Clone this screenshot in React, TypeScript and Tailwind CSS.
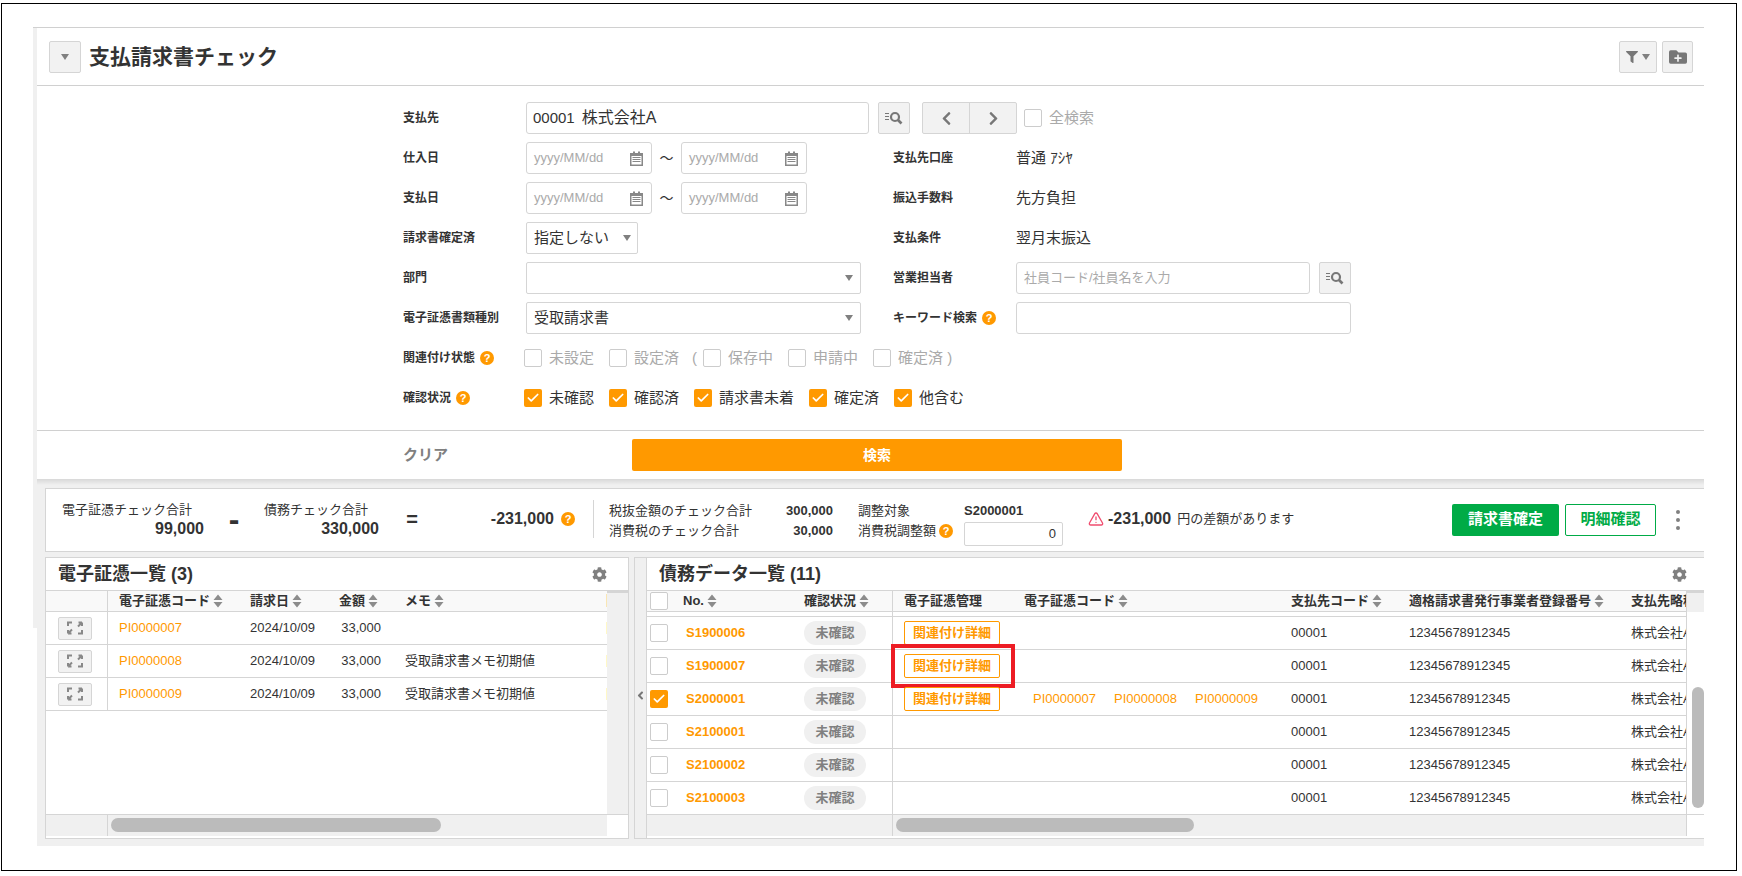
import { FaAngleLeft, FaChevronLeft, FaChevronRight, FaCog, FaFilter, FaFolderPlus } from 'react-icons/fa';
import { Check, TriangleAlert } from 'lucide-react';

const Help = () => (
  <span className="flex h-[14px] w-[14px] shrink-0 items-center justify-center rounded-full bg-[#ff9900] text-[11px] leading-none font-bold text-white">
    ?
  </span>
);

const CheckBox = ({ checked = false }: { checked?: boolean }) =>
  checked ? (
    <span className="flex h-[18px] w-[18px] shrink-0 items-center justify-center rounded-[2px] bg-[#ff9900] text-white">
      <Check size={14} strokeWidth={3} />
    </span>
  ) : (
    <span className="block h-[18px] w-[18px] shrink-0 rounded-[2px] border border-[#ccc] bg-white" />
  );

const Caret = () => (
  <span className="h-0 w-0 border-x-[4px] border-t-[6px] border-x-transparent border-t-[#808080]" />
);

const SearchList = () => (
  <svg width="18" height="14" viewBox="0 0 18 14" fill="none" stroke="#777">
    <path d="M0 2.5h4M0 5.5h4M0 8.5h4" strokeWidth="1" />
    <circle cx="10" cy="6" r="4" strokeWidth="2.2" />
    <path d="M13 9l3.5 3.5" strokeWidth="2.6" />
  </svg>
);

const Calendar = () => (
  <svg width="15" height="15" viewBox="0 0 15 15" className="shrink-0">
    <path d="M1 2h3V0.5h2V2h3V0.5h2V2h3v13H1z" fill="#888" />
    <path d="M2.5 5h10v8.5h-10z" fill="#fff" />
    <path d="M3.5 6.5h8M3.5 8.5h8M3.5 10.5h8" stroke="#888" />
  </svg>
);

const Expand = () => (
  <svg width="16" height="14" viewBox="0 0 16 14" fill="none" stroke="#888" strokeWidth="2">
    <path d="M1 5V1.5h4M15 1.5l-4 4M15 1.5h-3.5M15 1.5V5" />
    <path d="M1 12.5l4-4M1 12.5h3.5M1 12.5V9M11 12.5h4V9" />
  </svg>
);

const Sort = () => (
  <svg width="10" height="14" viewBox="0 0 10 14" className="ml-[3px] shrink-0" fill="#8c8c8c">
    <path d="M5 0.5L9.5 6h-9zM5 13.5L0.5 8h9z" />
  </svg>
);

const IconBtn = ({ children, className }: { children: React.ReactNode; className: string }) => (
  <div className={`flex h-[32px] shrink-0 items-center justify-center rounded-[2px] border border-[#d5d5d5] bg-[#f2f2f2] ${className}`}>
    {children}
  </div>
);

const FormLabel = ({ children, help }: { children: React.ReactNode; help?: boolean }) => (
  <div className="flex shrink-0 items-center gap-[5px] text-[12px] font-bold text-[#333]">
    {children}
    {help && <Help />}
  </div>
);

const DateInput = () => (
  <div className="flex h-[32px] w-[126px] shrink-0 items-center justify-between rounded-[3px] border border-[#d5d5d5] pr-[7px] pl-[7px] text-[13px] text-[#aaa]">
    yyyy/MM/dd
    <Calendar />
  </div>
);

const DateRange = () => (
  <div className="flex w-[281px] shrink-0 items-center">
    <DateInput />
    <span className="w-[30px] text-center text-[14px] text-[#333]">～</span>
    <DateInput />
  </div>
);

const CheckItem = ({ label, checked, className }: { label: string; checked?: boolean; className: string }) => (
  <div className={`flex shrink-0 items-center gap-[7px] text-[15px] ${checked ? 'text-[#333]' : 'text-[#aaa]'} ${className}`}>
    <CheckBox checked={checked} />
    {label}
  </div>
);

const Gear = () => <FaCog size={15} color="#808080" />;

const leftRows = [
  { code: 'PI0000007', memo: '' },
  { code: 'PI0000008', memo: '受取請求書メモ初期値' },
  { code: 'PI0000009', memo: '受取請求書メモ初期値' },
];

const rightRows = ['S1900006', 'S1900007', 'S2000001', 'S2100001', 'S2100002', 'S2100003'];

export default function App() {
  return (
    <div className="h-[876px] w-[1742px] overflow-hidden bg-white pt-[3px] pl-[1px] font-['Liberation_Sans','Noto_Sans_CJK_JP',sans-serif] text-[#333]">
      <div className="h-[868px] w-[1736px] border border-black pt-[23px] pl-[31px]">
        <div className="flex w-[1671px] border-t border-[#d0d0d0]">
          <div className="h-[600px] w-[4px] shrink-0 bg-[#f0f0f0]" />
          <div className="w-[1667px]">
            {/* title bar */}
            <div className="flex h-[58px] items-center justify-between border-b border-[#d0d0d0] pr-[11px] pl-[12px]">
              <div className="flex items-center gap-[8px]">
                <IconBtn className="w-[32px]">
                  <Caret />
                </IconBtn>
                <h1 className="text-[21px] font-bold">支払請求書チェック</h1>
              </div>
              <div className="flex items-center gap-[5px]">
                <IconBtn className="w-[38px] gap-[4px]">
                  <FaFilter size={12} color="#777" />
                  <Caret />
                </IconBtn>
                <IconBtn className="w-[31px]">
                  <FaFolderPlus size={18} color="#777" />
                </IconBtn>
              </div>
            </div>

            {/* search form */}
            <div className="flex h-[345px] flex-col gap-[8px] border-b border-[#d0d0d0] pt-[16px] pl-[366px]">
              <div className="flex h-[32px] items-center">
                <div className="w-[123px]"><FormLabel>支払先</FormLabel></div>
                <div className="flex h-[32px] w-[343px] items-center rounded-[3px] border border-[#d5d5d5] pl-[6px] text-[15px]">
                  00001<span className="ml-[7px] text-[16px]">株式会社A</span>
                </div>
                <IconBtn className="ml-[9px] w-[32px]"><SearchList /></IconBtn>
                <div className="ml-[12px] flex h-[32px] w-[95px] rounded-[2px] border border-[#d5d5d5] bg-[#f2f2f2]">
                  <div className="flex w-[47px] items-center justify-center border-r border-[#d5d5d5]"><FaChevronLeft size={15} color="#777" /></div>
                  <div className="flex flex-1 items-center justify-center"><FaChevronRight size={15} color="#777" /></div>
                </div>
                <CheckItem className="ml-[7px]" label="全検索" />
              </div>
              <div className="flex h-[32px] items-center">
                <div className="w-[123px]"><FormLabel>仕入日</FormLabel></div>
                <DateRange />
                <div className="ml-[86px] w-[123px]"><FormLabel>支払先口座</FormLabel></div>
                <span className="text-[15px]">普通 ｱｼﾔ</span>
              </div>
              <div className="flex h-[32px] items-center">
                <div className="w-[123px]"><FormLabel>支払日</FormLabel></div>
                <DateRange />
                <div className="ml-[86px] w-[123px]"><FormLabel>振込手数料</FormLabel></div>
                <span className="text-[15px]">先方負担</span>
              </div>
              <div className="flex h-[32px] items-center">
                <div className="w-[123px]"><FormLabel>請求書確定済</FormLabel></div>
                <div className="flex h-[32px] w-[112px] items-center justify-between rounded-[2px] border border-[#d5d5d5] pr-[6px] pl-[7px] text-[15px]">
                  指定しない
                  <Caret />
                </div>
                <div className="ml-[255px] w-[123px]"><FormLabel>支払条件</FormLabel></div>
                <span className="text-[15px]">翌月末振込</span>
              </div>
              <div className="flex h-[32px] items-center">
                <div className="w-[123px]"><FormLabel>部門</FormLabel></div>
                <div className="flex h-[32px] w-[335px] items-center justify-end rounded-[2px] border border-[#d5d5d5] pr-[7px]">
                  <Caret />
                </div>
                <div className="ml-[32px] w-[123px]"><FormLabel>営業担当者</FormLabel></div>
                <div className="flex h-[32px] w-[294px] items-center rounded-[3px] border border-[#d5d5d5] pl-[7px] text-[13px] text-[#aaa]">社員コード/社員名を入力</div>
                <IconBtn className="ml-[9px] w-[32px]"><SearchList /></IconBtn>
              </div>
              <div className="flex h-[32px] items-center">
                <div className="w-[123px]"><FormLabel>電子証憑書類種別</FormLabel></div>
                <div className="flex h-[32px] w-[335px] items-center justify-between rounded-[2px] border border-[#d5d5d5] pr-[7px] pl-[7px] text-[15px]">
                  受取請求書
                  <Caret />
                </div>
                <div className="ml-[32px] w-[123px]"><FormLabel help>キーワード検索</FormLabel></div>
                <div className="h-[32px] w-[335px] rounded-[3px] border border-[#d5d5d5]" />
              </div>
              <div className="flex h-[32px] items-center">
                <div className="w-[121px]"><FormLabel help>関連付け状態</FormLabel></div>
                <CheckItem className="w-[85px]" label="未設定" />
                <CheckItem className="w-[83px]" label="設定済" />
                <span className="w-[11px] text-[15px] text-[#aaa]">(</span>
                <CheckItem className="w-[85px]" label="保存中" />
                <CheckItem className="w-[85px]" label="申請中" />
                <CheckItem label="確定済 )" />
              </div>
              <div className="flex h-[32px] items-center">
                <div className="w-[121px]"><FormLabel help>確認状況</FormLabel></div>
                <CheckItem checked className="w-[85px]" label="未確認" />
                <CheckItem checked className="w-[85px]" label="確認済" />
                <CheckItem checked className="w-[115px]" label="請求書未着" />
                <CheckItem checked className="w-[85px]" label="確定済" />
                <CheckItem checked label="他含む" />
              </div>
            </div>

            {/* clear + search */}
            <div className="flex h-[48px] items-start pt-[8px] pl-[366px]">
              <div className="flex h-[32px] w-[229px] items-center text-[15px] font-bold text-[#808080]">クリア</div>
              <div className="flex h-[32px] w-[490px] items-center justify-center rounded-[2px] bg-[#ff9900] text-[14px] font-bold text-white">検索</div>
            </div>

            {/* results */}
            <div className="h-[367px] bg-[#f0f0f0] bg-gradient-to-b from-[#d8d8d8] to-[#f0f0f0] to-[6px] pt-[9px] pl-[8px]">
              <div className="flex h-[64px] w-[1659px] items-start border border-r-0 border-[#d5d5d5] bg-white">
                <div className="flex h-full items-center pb-[2px]">
                  <div className="ml-[16px] w-[142px] text-[13px] leading-[19px]">
                    <div>電子証憑チェック合計</div>
                    <div className="text-right text-[16px] font-bold">99,000</div>
                  </div>
                  <div className="w-[60px] text-center text-[32px] leading-[24px] font-bold">-</div>
                  <div className="w-[115px] text-[13px] leading-[19px]">
                    <div>債務チェック合計</div>
                    <div className="text-right text-[16px] font-bold">330,000</div>
                  </div>
                  <div className="w-[66px] text-center text-[20px] font-bold">=</div>
                  <div className="w-[109px] text-right text-[16px] font-bold">-231,000</div>
                  <div className="ml-[7px]"><Help /></div>
                  <div className="ml-[18px] h-[38px] w-px bg-[#d5d5d5]" />
                </div>
                <div className="ml-[15px] flex flex-col pt-[12px] text-[13px]">
                  <div className="flex h-[20px] w-[224px] items-center justify-between">
                    <span>税抜金額のチェック合計</span>
                    <span className="font-bold">300,000</span>
                  </div>
                  <div className="flex h-[20px] items-center justify-between">
                    <span>消費税のチェック合計</span>
                    <span className="font-bold">30,000</span>
                  </div>
                </div>
                <div className="ml-[25px] flex w-[106px] flex-col pt-[12px] text-[13px]">
                  <div className="flex h-[20px] items-center">調整対象</div>
                  <div className="flex h-[20px] items-center gap-[3px]">消費税調整額<Help /></div>
                </div>
                <div className="w-[99px] pt-[12px] text-[13px]">
                  <div className="flex h-[20px] items-center font-bold">S2000001</div>
                  <div className="mt-[1px] flex h-[24px] items-center justify-end rounded-[2px] border border-[#d5d5d5] pr-[6px]">0</div>
                </div>
                <div className="ml-[25px] flex h-full items-center pb-[2px]">
                  <TriangleAlert size={16} color="#f04d6f" />
                  <span className="ml-[4px] text-[16px] font-bold">-231,000</span>
                  <span className="ml-[6px] text-[13px]">円の差額があります</span>
                </div>
                <div className="ml-auto flex h-full items-center pr-[24px] pb-[1px]">
                  <div className="flex h-[32px] w-[107px] items-center justify-center rounded-[2px] bg-[#00ab46] text-[15px] font-bold text-white">請求書確定</div>
                  <div className="ml-[6px] flex h-[32px] w-[91px] items-center justify-center rounded-[2px] border border-[#00ab46] text-[15px] font-bold text-[#00ab46]">明細確認</div>
                  <div className="ml-[20px] flex w-[4px] flex-col gap-[4px]">
                    <span className="h-[4px] w-[4px] rounded-full bg-[#808080]" />
                    <span className="h-[4px] w-[4px] rounded-full bg-[#808080]" />
                    <span className="h-[4px] w-[4px] rounded-full bg-[#808080]" />
                  </div>
                </div>
              </div>

              <div className="mt-[5px] flex h-[282px] w-[1659px]">
                {/* electronic documents list */}
                <div className="flex w-[584px] flex-col border border-[#d5d5d5] bg-white">
                  <div className="flex h-[33px] shrink-0 items-center justify-between border-b border-[#d5d5d5] pr-[21px] pl-[12px]">
                    <h2 className="text-[18px] font-bold">電子証憑一覧 <span className="font-bold">(3)</span></h2>
                    <Gear />
                  </div>
                  <div className="flex flex-1 overflow-hidden">
                    <div className="w-[561px] overflow-hidden">
                      <div className="flex h-[21px] items-center border-b border-[#d5d5d5] bg-[#f9f9f9] text-[13px] font-bold whitespace-nowrap">
                        <div className="h-full w-[62px] shrink-0 border-r border-[#d5d5d5]" />
                        <div className="flex w-[142px] shrink-0 items-center pl-[11px]">電子証憑コード<Sort /></div>
                        <div className="flex w-[89px] shrink-0 items-center">請求日<Sort /></div>
                        <div className="flex w-[66px] shrink-0 items-center">金額<Sort /></div>
                        <div className="flex w-[201px] shrink-0 items-center">メモ<Sort /></div>
                        <div className="shrink-0">関連</div>
                      </div>
                      {leftRows.map((row) => (
                        <div key={row.code} className="flex h-[33px] items-center border-b border-[#d5d5d5] text-[13px] whitespace-nowrap">
                          <div className="flex h-full w-[62px] shrink-0 items-center border-r border-[#d5d5d5] pl-[12px]">
                            <div className="flex h-[23px] w-[34px] items-center justify-center rounded-[2px] border border-[#d5d5d5] bg-[#f2f2f2]">
                              <Expand />
                            </div>
                          </div>
                          <div className="w-[142px] shrink-0 pl-[11px] text-[#ff9900]">{row.code}</div>
                          <div className="w-[89px] shrink-0">2024/10/09</div>
                          <div className="w-[66px] shrink-0 pr-[24px] text-right">33,000</div>
                          <div className="w-[201px] shrink-0">{row.memo}</div>
                          <div className="shrink-0 text-[#ff9900]">関連</div>
                        </div>
                      ))}
                    </div>
                    <div className="w-[21px] border-t-2 border-[#d5d5d5] bg-[#f0f0f0]" />
                  </div>
                  <div className="flex h-[24px] shrink-0 border-t border-[#d5d5d5] pb-[2px]">
                    <div className="w-[62px] border-r border-[#d5d5d5] bg-[#f0f0f0]" />
                    <div className="w-[499px] bg-[#f0f0f0] pt-[3px] pl-[3px]">
                      <div className="h-[14px] w-[330px] rounded-full bg-[#bbb]" />
                    </div>
                    <div className="flex-1" />
                  </div>
                </div>

                {/* splitter */}
                <div className="ml-[5px] flex w-[12px] items-center justify-center border-y border-l border-[#d5d5d5] bg-[#f0f0f0] pb-[6px]">
                  <FaAngleLeft size={13} color="#777" />
                </div>

                {/* payables list */}
                <div className="flex w-[1058px] flex-col border border-r-0 border-[#d5d5d5] bg-white">
                  <div className="flex h-[33px] shrink-0 items-center justify-between border-b border-[#d5d5d5] pr-[17px] pl-[12px]">
                    <h2 className="text-[18px] font-bold">債務データ一覧 <span className="font-bold">(11)</span></h2>
                    <Gear />
                  </div>
                  <div className="flex flex-1 overflow-hidden">
                    <div className="flex w-[1039px] flex-col overflow-hidden">
                      <div className="flex h-[21px] shrink-0 items-center border-b border-[#d5d5d5] bg-[#f9f9f9] text-[13px] font-bold whitespace-nowrap">
                        <div className="flex h-full w-[246px] shrink-0 items-center border-r border-[#d5d5d5]">
                          <div className="w-[36px] pl-[3px]"><CheckBox /></div>
                          <div className="flex w-[121px] items-center">No.<Sort /></div>
                          <div className="flex items-center">確認状況<Sort /></div>
                        </div>
                        <div className="w-[11px] shrink-0" />
                        <div className="w-[120px] shrink-0">電子証憑管理</div>
                        <div className="flex w-[267px] shrink-0 items-center">電子証憑コード<Sort /></div>
                        <div className="flex w-[118px] shrink-0 items-center">支払先コード<Sort /></div>
                        <div className="flex w-[222px] shrink-0 items-center">適格請求書発行事業者登録番号<Sort /></div>
                        <div className="shrink-0">支払先略称</div>
                      </div>
                      <div className="flex h-[5px] shrink-0 border-b border-[#d5d5d5]">
                        <div className="h-full w-[246px] border-r border-[#d5d5d5]" />
                      </div>
                      <div className="flex-1 overflow-hidden">
                        {rightRows.map((code, i) => (
                          <div key={code} className="flex h-[33px] items-center border-b border-[#d5d5d5] text-[13px] whitespace-nowrap">
                            <div className="flex h-full w-[246px] shrink-0 items-center border-r border-[#d5d5d5]">
                              <div className="w-[36px] pl-[3px]"><CheckBox checked={i === 2} /></div>
                              <div className="w-[121px] pl-[3px] font-bold text-[#ff9900]">{code}</div>
                              <div className="flex h-[24px] w-[62px] items-center justify-center rounded-full bg-[#f0f0f0] font-bold text-[#808080]">未確認</div>
                            </div>
                            <div className="w-[11px] shrink-0" />
                            <div className="w-[120px] shrink-0">
                              {i < 3 && (
                                <div className="relative flex h-[24px] w-[96px] items-center justify-center rounded-[2px] border border-[#ff9900] font-bold text-[#ff9900]">
                                  関連付け詳細
                                  {i === 1 && <div className="absolute -top-[11px] -right-[16px] -bottom-[11px] -left-[14px] border-4 border-[#ed1c24]" />}
                                </div>
                              )}
                            </div>
                            <div className="flex w-[267px] shrink-0 pl-[9px] text-[#ff9900]">
                              {i === 2 && (
                                <>
                                  <span className="w-[81px]">PI0000007</span>
                                  <span className="w-[81px]">PI0000008</span>
                                  <span>PI0000009</span>
                                </>
                              )}
                            </div>
                            <div className="w-[118px] shrink-0">00001</div>
                            <div className="w-[222px] shrink-0">12345678912345</div>
                            <div className="shrink-0">株式会社A</div>
                          </div>
                        ))}
                      </div>
                    </div>
                    <div className="w-[18px] border-l border-[#d5d5d5]">
                      <div className="h-[21px] border-t-2 border-[#d5d5d5] bg-[#f0f0f0]" />
                      <div className="mt-[75px] ml-[5px] h-[121px] w-[12px] rounded-full bg-[#bbb]" />
                    </div>
                  </div>
                  <div className="flex h-[24px] shrink-0 border-t border-[#d5d5d5] pb-[2px]">
                    <div className="w-[246px] border-r border-[#d5d5d5] bg-[#f0f0f0]" />
                    <div className="w-[793px] bg-[#f0f0f0] pt-[3px] pl-[3px]">
                      <div className="h-[14px] w-[298px] rounded-full bg-[#bbb]" />
                    </div>
                    <div className="flex-1 border-l border-[#d5d5d5]" />
                  </div>
                </div>
              </div>
            </div>
          </div>
        </div>
      </div>
    </div>
  );
}
